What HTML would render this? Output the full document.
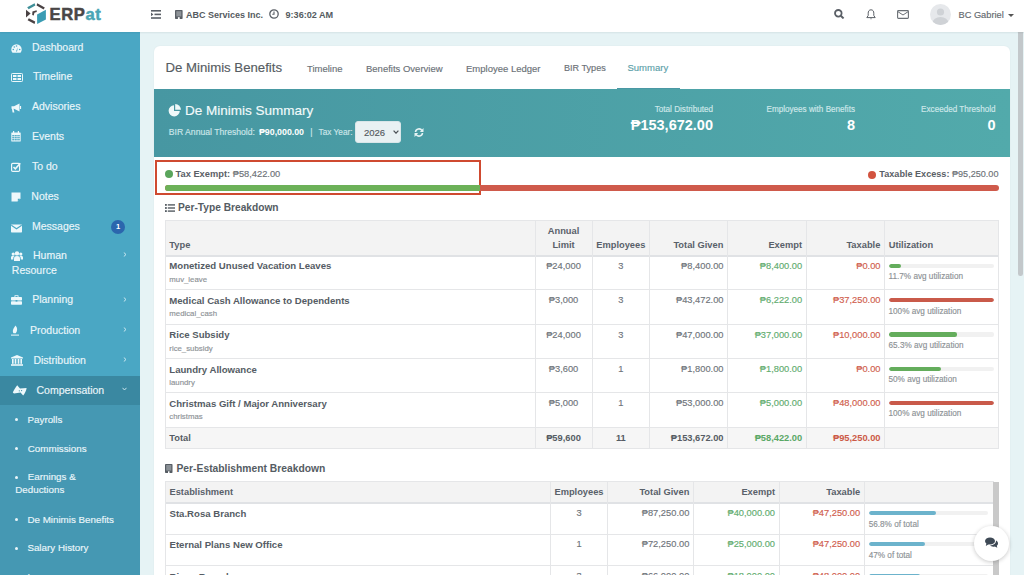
<!DOCTYPE html>
<html><head><meta charset="utf-8">
<style>
*{box-sizing:border-box;margin:0;padding:0}
html,body{width:1024px;height:575px;overflow:hidden}
body{font-family:"Liberation Sans",sans-serif;background:#e6f3f5;position:relative;color:#555d66;-webkit-text-stroke-width:0.15px}
.abs{position:absolute}
b,th,[style*="font-weight:bold"],.val{-webkit-text-stroke-width:0}
#nav{position:absolute;left:0;top:0;width:1024px;height:32px;background:#fff;box-shadow:0 1px 1.5px rgba(0,40,50,.08);z-index:2}
#side{position:absolute;left:0;top:32px;width:140px;height:543px;background:#4aa7c4;color:#eaf6fa}
.si{position:absolute;left:0;width:140px;font-size:10.5px;white-space:nowrap}
.si .ic{position:absolute;left:11px;width:11px;height:10px}
.si .tx{position:absolute;left:32px}
.chev{position:absolute;left:122px;font-size:8px}
#sub{position:absolute;left:0;top:373px;width:140px;height:170px;background:#4598b3}
.sb{position:absolute;left:0;font-size:9.8px;white-space:nowrap}
.sb .dot{position:absolute;left:15px;width:3px;height:3px;border-radius:50%;background:#eaf6fa}
.sb .tx{position:absolute;left:27.5px}
#card{position:absolute;left:154px;top:46px;width:856px;height:600px;background:#fff;border-radius:6px;box-shadow:0 0 2px rgba(0,0,0,.05)}
.tab{position:absolute;font-size:9.5px;color:#6b7177;white-space:nowrap}
#teal{position:absolute;left:154px;top:89px;width:856px;height:68px;background:linear-gradient(90deg,#4797a2,#52aaab)}
.lbl{position:absolute;font-size:8.15px;color:#cfe8ea;margin-top:0.7px;white-space:nowrap;text-align:right}
.val{position:absolute;font-size:14.5px;font-weight:bold;color:#fff;white-space:nowrap;text-align:right}
table{border-collapse:collapse;table-layout:fixed;position:absolute}
td,th{border:1px solid #e3e5e8;font-size:9.3px;white-space:nowrap;overflow:hidden}
th{background:#f3f3f3;font-weight:bold;color:#59616a;vertical-align:bottom;padding:0 4px 5px 4px;line-height:13px}
td{vertical-align:top;color:#676d73;padding:5px 4px 0 4px}
.r{text-align:right}.c{text-align:center}
.nm{font-weight:bold;color:#555d66;line-height:13px}
.code{font-size:7.4px;color:#8b9095;margin-top:1px}
.g{color:#62ab6c}.rd{color:#cf5a48}
.bar{height:4px;background:#f0f0f0;border-radius:2px;position:relative;margin-top:4px}
.bar i{position:absolute;left:0;top:0;height:4px;border-radius:2px}
.ut{font-size:7.4px;color:#8b9095;margin-top:3px}
</style></head><body>
<div id="nav">
<svg class="abs" style="left:22px;top:0px" width="28" height="28" viewBox="0 0 28 28">
 <polygon fill="#3f8f98" points="5.2,7.2 12.6,3.2 13.4,5.6 6.6,9.2"/>
 <polygon fill="#4a4244" points="15.2,3.2 22.8,7.4 21.6,9.6 14.6,5.6"/>
 <polygon fill="#4a4244" points="4,9.8 8.6,13.6 4,17.6"/>
 <polygon fill="#4a4244" points="10.4,11.6 14.6,10.2 14.8,12 12.4,12.8 11.8,15.6 10.2,15"/>
 <polygon fill="#4a4244" points="5.6,20.2 6.8,18.2 13.2,21.6 12.6,24"/>
 <polygon fill="#3a9cb3" points="15.1,14.6 23.9,9.8 23.9,19.5 15.1,23.9"/>
</svg>
<div class="abs" style="left:49.5px;top:4.6px;font-size:16.6px;line-height:19px;font-weight:bold;color:#4a4747;letter-spacing:0.6px;-webkit-text-stroke:0.5px #4a4747">ERP<span style="color:#4aa5b5;-webkit-text-stroke:0.5px #4aa5b5">at</span></div>
<svg class="abs" style="left:151px;top:10px" width="10" height="9" viewBox="0 0 10 9"><g fill="#5a5f66"><rect x="0" y="0" width="10" height="1.6"/><rect x="3.5" y="3.6" width="6.5" height="1.6"/><rect x="0" y="7.2" width="10" height="1.6"/><polygon points="0,2.6 2.4,4.4 0,6.2"/></g></svg>
<svg class="abs" style="left:175px;top:10px" width="8" height="9" viewBox="0 0 8 9"><rect x="0" y="0" width="7.6" height="9" rx="0.7" fill="#5a5f66"/><rect x="1.3" y="1.2" width="5" height="5.2" fill="#8e9398"/><rect x="2.9" y="7.2" width="1.8" height="1.8" fill="#fff"/></svg>
<div class="abs" style="left:186px;top:9.6px;font-size:9px;font-weight:bold;color:#555b61">ABC Services Inc.</div>
<svg class="abs" style="left:269px;top:8.5px" width="10" height="10" viewBox="0 0 10 10"><circle cx="5" cy="5" r="4.2" fill="none" stroke="#5a5f66" stroke-width="1.3"/><path d="M5 2.6V5.3H3.3" fill="none" stroke="#5a5f66" stroke-width="1.1"/></svg>
<div class="abs" style="left:285.5px;top:9.6px;font-size:9.1px;font-weight:bold;color:#555b61">9:36:02 AM</div>
<svg class="abs" style="left:834px;top:9px" width="11" height="10" viewBox="0 0 11 10"><circle cx="4.3" cy="4.3" r="3.3" fill="none" stroke="#5a5f66" stroke-width="1.8"/><path d="M6.8 6.8L9.6 9.4" stroke="#5a5f66" stroke-width="2"/></svg>
<svg class="abs" style="left:866px;top:9px" width="10" height="11" viewBox="0 0 10 11"><path d="M5 0.8C3 0.8 2.2 2.4 2.2 4.2V6.5L0.8 8.6H9.2L7.8 6.5V4.2C7.8 2.4 7 0.8 5 0.8Z" fill="none" stroke="#5a5f66" stroke-width="1"/><path d="M4 9.5H6L5 10.5Z" fill="#5a5f66"/></svg>
<svg class="abs" style="left:897px;top:10px" width="12" height="9" viewBox="0 0 12 9"><rect x="0.6" y="0.6" width="10.8" height="7.8" rx="0.8" fill="none" stroke="#6a6f75" stroke-width="1.1"/><path d="M0.8 1.6L6 5L11.2 1.6" fill="none" stroke="#6a6f75" stroke-width="1"/></svg>
<svg class="abs" style="left:929.5px;top:3.5px" width="21" height="21" viewBox="0 0 21 21"><defs><clipPath id="av"><circle cx="10.5" cy="10.5" r="10.5"/></clipPath></defs><circle cx="10.5" cy="10.5" r="10.5" fill="#e6e8eb"/><g clip-path="url(#av)" fill="#cfd2d6"><circle cx="10.5" cy="8" r="3.6"/><ellipse cx="10.5" cy="19" rx="8" ry="6"/></g></svg>
<div class="abs" style="left:958.5px;top:9.7px;font-size:9.25px;color:#63686e">BC Gabriel</div>
<svg class="abs" style="left:1008px;top:13.5px" width="6" height="4" viewBox="0 0 6 4"><polygon points="0,0 6,0 3,3" fill="#555"/></svg>
</div>
<div id="side">
<div class="si" style="top:19px"><div class="ic" style="top:-8px"><svg width="11" height="9" viewBox="0 0 11 9"><path d="M5.5 0.3A5.2 5.2 0 0 0 0.3 5.5C0.3 6.8 0.8 8 1.5 8.7H9.5C10.2 8 10.7 6.8 10.7 5.5A5.2 5.2 0 0 0 5.5 0.3Z" fill="#eef8fb"/><g fill="#4aa7c4"><circle cx="2.3" cy="5.5" r="0.8"/><circle cx="3.3" cy="3" r="0.8"/><circle cx="5.5" cy="2" r="0.8"/><circle cx="8.7" cy="5.5" r="0.8"/><path d="M5 7.5L6.8 3.2L6 7.6Z"/></g></svg></div><div class="tx" style="left:32px;top:-9.50px;line-height:10.5px">Dashboard</div></div>
<div class="si" style="top:48px"><div class="ic" style="top:-8px"><svg width="12" height="9" viewBox="0 0 12 9"><rect x="0.5" y="0.5" width="11" height="8" rx="0.8" fill="none" stroke="#eef8fb" stroke-width="1"/><g fill="#eef8fb"><rect x="2" y="2" width="3.5" height="2"/><rect x="6.5" y="2" width="3.5" height="2"/><rect x="2" y="5" width="3.5" height="2"/><rect x="6.5" y="5" width="3.5" height="2"/></g></svg></div><div class="tx" style="left:33px;top:-9.50px;line-height:10.5px">Timeline</div></div>
<div class="si" style="top:78.5px"><div class="ic" style="top:-8px"><svg width="11" height="10" viewBox="0 0 11 10"><path d="M0.5 3.2H3L8.5 0.6V8.4L3 5.8H2.6L3.4 9.4H1.6L0.9 5.8H0.5Z" fill="#eef8fb"/><path d="M9.5 3V6" stroke="#eef8fb" stroke-width="1.2"/></svg></div><div class="tx" style="left:32px;top:-9.50px;line-height:10.5px">Advisories</div></div>
<div class="si" style="top:108px"><div class="ic" style="top:-9px"><svg width="10" height="11" viewBox="0 0 10 11"><rect x="0.3" y="1.5" width="9.4" height="9" rx="0.6" fill="#eef8fb"/><g fill="#4aa7c4"><rect x="1.3" y="4" width="1.6" height="1.4"/><rect x="3.5" y="4" width="1.4" height="1.4"/><rect x="5.3" y="4" width="1.4" height="1.4"/><rect x="7.2" y="4" width="1.5" height="1.4"/><rect x="1.3" y="6" width="1.6" height="1.4"/><rect x="3.5" y="6" width="1.4" height="1.4"/><rect x="5.3" y="6" width="1.4" height="1.4"/><rect x="7.2" y="6" width="1.5" height="1.4"/><rect x="1.3" y="8" width="1.6" height="1.4"/><rect x="3.5" y="8" width="1.4" height="1.4"/><rect x="5.3" y="8" width="1.4" height="1.4"/><rect x="7.2" y="8" width="1.5" height="1.4"/></g><g fill="#eef8fb"><rect x="2" y="0" width="1.2" height="2"/><rect x="6.8" y="0" width="1.2" height="2"/></g></svg></div><div class="tx" style="left:32px;top:-9.50px;line-height:10.5px">Events</div></div>
<div class="si" style="top:138px"><div class="ic" style="top:-8.5px"><svg width="10" height="10" viewBox="0 0 10 10"><rect x="0.6" y="1.4" width="8" height="8" rx="1.2" fill="none" stroke="#eef8fb" stroke-width="1.2"/><path d="M2.5 5L4.3 6.8L9.3 1.2" fill="none" stroke="#eef8fb" stroke-width="1.6"/></svg></div><div class="tx" style="left:32px;top:-9.50px;line-height:10.5px">To do</div></div>
<div class="si" style="top:168px"><div class="ic" style="top:-8.5px"><svg width="10" height="10" viewBox="0 0 10 10"><path d="M0.5 0.5H9.5V6.5L6.5 9.5H0.5Z" fill="#eef8fb"/><path d="M6.8 9.5V6.8H9.5" fill="#4aa7c4"/></svg></div><div class="tx" style="left:31.3px;top:-9.50px;line-height:10.5px">Notes</div></div>
<div class="si" style="top:198px"><div class="ic" style="top:-7.5px"><svg width="11" height="9" viewBox="0 0 11 9"><rect x="0" y="0.5" width="11" height="8" rx="0.7" fill="#eef8fb"/><path d="M0.3 1.2L5.5 4.8L10.7 1.2" fill="none" stroke="#4aa7c4" stroke-width="1.1"/></svg></div><div class="tx" style="left:32px;top:-9.50px;line-height:10.5px">Messages</div></div>
<div class="si" style="top:227.5px"><div class="ic" style="top:-9px"><svg width="12" height="10" viewBox="0 0 12 10"><g fill="#eef8fb"><circle cx="6" cy="2.4" r="2.2"/><circle cx="2.2" cy="3" r="1.6"/><circle cx="9.8" cy="3" r="1.6"/><path d="M3 10V7.5C3 5.8 4.2 5 6 5C7.8 5 9 5.8 9 7.5V10Z"/><path d="M0 8.5V6.5C0 5.3 0.8 4.8 2.2 4.8C2.8 4.8 3.2 4.9 3.5 5.1C2.6 5.7 2.3 6.5 2.3 7.5V8.5Z"/><path d="M12 8.5V6.5C12 5.3 11.2 4.8 9.8 4.8C9.2 4.8 8.8 4.9 8.5 5.1C9.4 5.7 9.7 6.5 9.7 7.5V8.5Z"/></g></svg></div><div class="tx" style="left:33px;top:-9.50px;line-height:10.5px">Human</div></div>
<div class="si" style="top:271.5px"><div class="ic" style="top:-9px"><svg width="11" height="10" viewBox="0 0 11 10"><g fill="#eef8fb"><path d="M3.5 2V0.8C3.5 0.3 3.8 0.2 4.2 0.2H6.8C7.2 0.2 7.5 0.3 7.5 0.8V2H6.6V1H4.4V2Z"/><rect x="0" y="2" width="11" height="3.6" rx="0.8"/><rect x="0" y="6.2" width="11" height="3.6" rx="0.8"/></g><rect x="4.6" y="5" width="1.8" height="1.6" fill="#4aa7c4"/></svg></div><div class="tx" style="left:32.2px;top:-9.50px;line-height:10.5px">Planning</div></div>
<div class="si" style="top:302px"><div class="ic" style="top:-9px"><svg width="8" height="11" viewBox="0 0 8 11"><path d="M4.5 0.5C6.5 2.5 6.8 5.5 4.8 8.2L2.5 8.2C1 6.2 2.2 3.8 4.5 0.5Z" fill="#eef8fb"/><rect x="0" y="9.6" width="8" height="1" fill="#eef8fb"/></svg></div><div class="tx" style="left:30px;top:-9.50px;line-height:10.5px">Production</div></div>
<div class="si" style="top:332px"><div class="ic" style="top:-9px"><svg width="12" height="11" viewBox="0 0 12 11"><g fill="#eef8fb"><polygon points="6,0 12,2.5 12,3.5 0,3.5 0,2.5"/><rect x="1" y="4" width="1.6" height="4.8"/><rect x="3.7" y="4" width="1.6" height="4.8"/><rect x="6.7" y="4" width="1.6" height="4.8"/><rect x="9.4" y="4" width="1.6" height="4.8"/><rect x="0" y="9.2" width="12" height="1.6"/></g></svg></div><div class="tx" style="left:33.4px;top:-9.50px;line-height:10.5px">Distribution</div></div>
<div class="abs" style="left:11.8px;top:232.5px;font-size:10.5px;line-height:10.5px">Resource</div>
<svg class="abs" style="left:122.5px;top:220px" width="4" height="5" viewBox="0 0 4 5"><path d="M0.8 0.5L3 2.5L0.8 4.5" fill="none" stroke="#d8eef5" stroke-width="0.9"/></svg>
<svg class="abs" style="left:122.5px;top:264.5px" width="4" height="5" viewBox="0 0 4 5"><path d="M0.8 0.5L3 2.5L0.8 4.5" fill="none" stroke="#d8eef5" stroke-width="0.9"/></svg>
<svg class="abs" style="left:122.5px;top:295px" width="4" height="5" viewBox="0 0 4 5"><path d="M0.8 0.5L3 2.5L0.8 4.5" fill="none" stroke="#d8eef5" stroke-width="0.9"/></svg>
<svg class="abs" style="left:122.5px;top:324.5px" width="4" height="5" viewBox="0 0 4 5"><path d="M0.8 0.5L3 2.5L0.8 4.5" fill="none" stroke="#d8eef5" stroke-width="0.9"/></svg>
<div class="abs" style="left:111px;top:187.5px;width:14px;height:14px;border-radius:50%;background:#2b66ad;color:#fff;font-size:7.5px;font-weight:bold;text-align:center;line-height:14px">1</div>
<div class="abs" style="left:0;top:344px;width:140px;height:29px;background:#3a88a1"></div>
<svg class="abs" style="left:12px;top:352px" width="16" height="12" viewBox="0 0 16 12"><path d="M0.8 8.6C1.5 6.5 3.2 4 5.2 1.2C6.2 2.4 7.2 3.6 8 4.6L14.6 4C14.3 6.5 13 9 11.2 11.6C10.2 10.6 9.3 9.6 8.6 8.6L2 9.6Z" fill="#eef8fb"/><circle cx="7.3" cy="6.8" r="0.6" fill="#3a88a1"/><circle cx="9.6" cy="6.6" r="0.6" fill="#3a88a1"/></svg>
<div class="abs" style="left:36.5px;top:352.5px;font-size:10.5px;line-height:10.5px">Compensation</div>
<svg class="abs" style="left:121.5px;top:354.5px" width="5" height="4" viewBox="0 0 5 4"><path d="M0.5 0.8L2.5 3L4.5 0.8" fill="none" stroke="#d8eef5" stroke-width="0.9"/></svg>
<div id="sub">
<div class="sb" style="top:17.600000000000023px"><div class="dot" style="top:-4.5px"></div><div class="tx" style="left:27.5px;top:-8.07px;line-height:9.8px">Payrolls</div></div>
<div class="sb" style="top:46.60000000000002px"><div class="dot" style="top:-4.5px"></div><div class="tx" style="left:27.8px;top:-8.07px;line-height:9.8px">Commissions</div></div>
<div class="sb" style="top:75px"><div class="dot" style="top:-4.5px"></div><div class="tx" style="left:27.8px;top:-8.07px;line-height:9.8px">Earnings &amp;</div></div>
<div class="sb" style="top:88.30000000000001px"><div class="tx" style="left:15.3px;top:-8.07px;line-height:9.8px">Deductions</div></div>
<div class="sb" style="top:117.60000000000002px"><div class="dot" style="top:-4.5px"></div><div class="tx" style="left:27.4px;top:-8.07px;line-height:9.8px">De Minimis Benefits</div></div>
<div class="sb" style="top:146.29999999999995px"><div class="dot" style="top:-4.5px"></div><div class="tx" style="left:27.4px;top:-8.07px;line-height:9.8px">Salary History</div></div>
<div class="sb" style="top:175.5px"><div class="dot" style="top:-4.5px"></div><div class="tx" style="left:27.4px;top:-8.07px;line-height:9.8px">Loans</div></div>
</div>
</div>
<div id="card">
<div class="abs" style="left:11.5px;top:14.8px;font-size:13.2px;color:#565c62;line-height:13.2px">De Minimis Benefits</div>
<div class="tab" style="left:153px;top:17.4px">Timeline</div>
<div class="tab" style="left:212px;top:17.4px">Benefits Overview</div>
<div class="tab" style="left:312px;top:17.4px">Employee Ledger</div>
<div class="tab" style="left:410px;top:17.4px;font-size:9.1px">BIR Types</div>
<div class="tab" style="left:473.5px;top:16.4px;color:#5d9fa9">Summary</div>
<div class="abs" style="left:463px;top:41.7px;width:63px;height:1.6px;background:#4a98a4"></div>
</div>
<div id="teal">
<svg class="abs" style="left:13.5px;top:14.5px" width="13" height="13" viewBox="0 0 13 13"><path d="M6 1.2A5.6 5.6 0 1 0 11.8 7H6Z" fill="#eef8f9"/><path d="M7.2 0A5.8 5.8 0 0 1 13 5.8H7.2Z" fill="#eef8f9"/></svg>
<div class="abs" style="left:31px;top:15.3px;font-size:13.5px;line-height:13.5px;color:#f2fafb">De Minimis Summary</div>
<div class="abs" style="left:14.8px;top:38.9px;font-size:8.65px;line-height:8.65px;color:#cde6e9;white-space:nowrap">BIR Annual Threshold:</div>
<div class="abs" style="left:105px;top:38.7px;font-size:8.8px;line-height:8.8px;color:#fff;font-weight:bold;white-space:nowrap">&#8369;90,000.00</div>
<div class="abs" style="left:156.3px;top:38.7px;font-size:8.8px;line-height:8.8px;color:#cde6e9;white-space:nowrap">|</div>
<div class="abs" style="left:164.5px;top:39.4px;font-size:8.3px;line-height:8.3px;color:#cde6e9;white-space:nowrap">Tax Year:</div>
<div class="abs" style="left:201px;top:32px;width:46px;height:22px;background:#e9f1f3;border-radius:3px;border:1px solid #d9e6e9"></div>
<div class="abs" style="left:210px;top:39px;font-size:9.5px;line-height:9.5px;color:#555b61">2026</div>
<svg class="abs" style="left:238.8px;top:40.5px" width="6" height="4" viewBox="0 0 6 4"><path d="M0.6 0.6L3 3.2L5.4 0.6" fill="none" stroke="#4d5257" stroke-width="1.2"/></svg>
<svg class="abs" style="left:259.5px;top:38.5px" width="10" height="9" viewBox="0 0 10 9"><g fill="none" stroke="#e6f3f4" stroke-width="1.6"><path d="M1.5 4A3.5 3.5 0 0 1 8 2.6"/><path d="M8.5 5A3.5 3.5 0 0 1 2 6.4"/></g><g fill="#e6f3f4"><polygon points="9.5,0 9.5,4 5.8,4"/><polygon points="0.5,9 0.5,5 4.2,5"/></g></svg>
<div class="lbl" style="right:297px;top:16px;line-height:8px">Total Distributed</div>
<div class="val" style="right:297px;top:29px;line-height:14px">&#8369;153,672.00</div>
<div class="lbl" style="right:155px;top:16px;line-height:8px">Employees with Benefits</div>
<div class="val" style="right:155px;top:29px;line-height:14px">8</div>
<div class="lbl" style="right:14.5px;top:16px;line-height:8px">Exceeded Threshold</div>
<div class="val" style="right:14.5px;top:29px;line-height:14px">0</div>
</div>










<!--T1-->
<div class="abs" style="left:154.8px;top:159.8px;width:326.4px;height:35.5px;border:2px solid #cf4a30"></div>
<div class="abs" style="left:164.5px;top:170.2px;width:8px;height:8px;border-radius:50%;background:#5aa55c"></div>
<div class="abs" style="left:175.5px;top:170.2px;font-size:9.3px;line-height:9.3px;color:#5a6066;white-space:nowrap"><b>Tax Exempt:</b> <span style="color:#6d7277">&#8369;58,422.00</span></div>
<div class="abs" style="left:867.5px;top:170.5px;width:8.5px;height:8.5px;border-radius:50%;background:#d2533f"></div>
<div class="abs" style="right:25.5px;top:170.2px;font-size:9.1px;line-height:9.1px;color:#5a6066;white-space:nowrap"><b>Taxable Excess:</b> <span style="color:#6d7277">&#8369;95,250.00</span></div>
<div class="abs" style="left:165px;top:184.7px;width:833.5px;height:6.8px;border-radius:3.3px;background:#cf5a4b;overflow:hidden"><div style="width:315px;height:100%;background:#6cb158"></div></div>
<svg class="abs" style="left:165px;top:204px" width="10" height="8" viewBox="0 0 10 8"><g fill="#555c63"><rect x="0" y="0" width="1.8" height="1.8"/><rect x="0" y="3.1" width="1.8" height="1.8"/><rect x="0" y="6.2" width="1.8" height="1.8"/><rect x="2.8" y="0.2" width="7.2" height="1.4"/><rect x="2.8" y="3.3" width="7.2" height="1.4"/><rect x="2.8" y="6.4" width="7.2" height="1.4"/></g></svg>
<div class="abs" style="left:178px;top:203px;font-size:10.2px;line-height:10.2px;font-weight:bold;color:#555c63;white-space:nowrap">Per-Type Breakdown</div>
<div class="abs" style="left:165px;top:220.3px;width:833px;height:35.0px;background:#f3f3f3"></div>
<div class="abs" style="left:165px;top:427.6px;width:833px;height:20.899999999999977px;background:#f6f6f6"></div>
<div class="abs" style="left:165px;top:219.8px;width:834px;height:1px;background:#e5e6e8"></div>
<div class="abs" style="left:165px;top:254.8px;width:834px;height:2px;background:#e0e2e5"></div>
<div class="abs" style="left:165px;top:289.2px;width:834px;height:1px;background:#e5e6e8"></div>
<div class="abs" style="left:165px;top:323.6px;width:834px;height:1px;background:#e5e6e8"></div>
<div class="abs" style="left:165px;top:358.0px;width:834px;height:1px;background:#e5e6e8"></div>
<div class="abs" style="left:165px;top:392.1px;width:834px;height:1px;background:#e5e6e8"></div>
<div class="abs" style="left:165px;top:427.1px;width:834px;height:1px;background:#e5e6e8"></div>
<div class="abs" style="left:165px;top:447.8px;width:834px;height:1px;background:#e5e6e8"></div>
<div class="abs" style="left:164.5px;top:220.3px;width:1px;height:228.0px;background:#e5e6e8"></div>
<div class="abs" style="left:534.5px;top:220.3px;width:1px;height:228.0px;background:#e5e6e8"></div>
<div class="abs" style="left:591.5px;top:220.3px;width:1px;height:228.0px;background:#e5e6e8"></div>
<div class="abs" style="left:649.0px;top:220.3px;width:1px;height:228.0px;background:#e5e6e8"></div>
<div class="abs" style="left:726.5px;top:220.3px;width:1px;height:228.0px;background:#e5e6e8"></div>
<div class="abs" style="left:805.5px;top:220.3px;width:1px;height:228.0px;background:#e5e6e8"></div>
<div class="abs" style="left:883.5px;top:220.3px;width:1px;height:228.0px;background:#e5e6e8"></div>
<div class="abs" style="left:997.5px;top:220.3px;width:1px;height:228.0px;background:#e5e6e8"></div>
<div class="abs" style="top:240.93px;font-size:9.3px;line-height:9.3px;color:#59616a;font-weight:bold;left:169.3px;white-space:nowrap">Type</div>
<div class="abs" style="top:227.13px;font-size:9.3px;line-height:9.3px;color:#59616a;font-weight:bold;left:503.5px;width:120px;text-align:center;white-space:nowrap">Annual</div>
<div class="abs" style="top:240.93px;font-size:9.3px;line-height:9.3px;color:#59616a;font-weight:bold;left:503.5px;width:120px;text-align:center;white-space:nowrap">Limit</div>
<div class="abs" style="top:240.93px;font-size:9.3px;line-height:9.3px;color:#59616a;font-weight:bold;left:560.8px;width:120px;text-align:center;white-space:nowrap">Employees</div>
<div class="abs" style="top:240.93px;font-size:9.3px;line-height:9.3px;color:#59616a;font-weight:bold;right:300.70000000000005px;white-space:nowrap">Total Given</div>
<div class="abs" style="top:240.93px;font-size:9.3px;line-height:9.3px;color:#59616a;font-weight:bold;right:222px;white-space:nowrap">Exempt</div>
<div class="abs" style="top:240.93px;font-size:9.3px;line-height:9.3px;color:#59616a;font-weight:bold;right:143.70000000000005px;white-space:nowrap">Taxable</div>
<div class="abs" style="top:240.93px;font-size:9.3px;line-height:9.3px;color:#59616a;font-weight:bold;left:888.7px;white-space:nowrap">Utilization</div>
<div class="abs" style="top:261.47px;font-size:9.6px;line-height:9.6px;color:#555c64;font-weight:bold;left:169.3px;white-space:nowrap">Monetized Unused Vacation Leaves</div>
<div class="abs" style="top:276.00px;font-size:7.8px;line-height:7.8px;color:#8d9296;left:169.3px;white-space:nowrap">muv_leave</div>
<div class="abs" style="top:261.73px;font-size:9.3px;line-height:9.3px;color:#6f757b;left:503.5px;width:120px;text-align:center;white-space:nowrap">&#8369;24,000</div>
<div class="abs" style="top:261.73px;font-size:9.3px;line-height:9.3px;color:#6f757b;left:560.8px;width:120px;text-align:center;white-space:nowrap">3</div>
<div class="abs" style="top:261.73px;font-size:9.3px;line-height:9.3px;color:#6f757b;right:300.5px;white-space:nowrap">&#8369;8,400.00</div>
<div class="abs" style="top:261.73px;font-size:9.3px;line-height:9.3px;color:#62ad6f;right:221.79999999999995px;white-space:nowrap">&#8369;8,400.00</div>
<div class="abs" style="top:261.73px;font-size:9.3px;line-height:9.3px;color:#d0604e;right:143.5px;white-space:nowrap">&#8369;0.00</div>
<div class="abs" style="left:888.5px;top:263.6px;width:105.5px;height:4.2px;border-radius:2.1px;background:#f1f1f1;overflow:hidden"><div style="width:12.3px;height:100%;background:#64ad5c;border-radius:2.1px"></div></div>
<div class="abs" style="top:273.16px;font-size:8.2px;line-height:8.2px;color:#8d9296;left:888.5px;white-space:nowrap">11.7% avg utilization</div>
<div class="abs" style="top:295.87px;font-size:9.6px;line-height:9.6px;color:#555c64;font-weight:bold;left:169.3px;white-space:nowrap">Medical Cash Allowance to Dependents</div>
<div class="abs" style="top:310.40px;font-size:7.8px;line-height:7.8px;color:#8d9296;left:169.3px;white-space:nowrap">medical_cash</div>
<div class="abs" style="top:296.13px;font-size:9.3px;line-height:9.3px;color:#6f757b;left:503.5px;width:120px;text-align:center;white-space:nowrap">&#8369;3,000</div>
<div class="abs" style="top:296.13px;font-size:9.3px;line-height:9.3px;color:#6f757b;left:560.8px;width:120px;text-align:center;white-space:nowrap">3</div>
<div class="abs" style="top:296.13px;font-size:9.3px;line-height:9.3px;color:#6f757b;right:300.5px;white-space:nowrap">&#8369;43,472.00</div>
<div class="abs" style="top:296.13px;font-size:9.3px;line-height:9.3px;color:#62ad6f;right:221.79999999999995px;white-space:nowrap">&#8369;6,222.00</div>
<div class="abs" style="top:296.13px;font-size:9.3px;line-height:9.3px;color:#d0604e;right:143.5px;white-space:nowrap">&#8369;37,250.00</div>
<div class="abs" style="left:888.5px;top:298.0px;width:105.5px;height:4.2px;border-radius:2.1px;background:#f1f1f1;overflow:hidden"><div style="width:105.5px;height:100%;background:#c95a4a;border-radius:2.1px"></div></div>
<div class="abs" style="top:307.56px;font-size:8.2px;line-height:8.2px;color:#8d9296;left:888.5px;white-space:nowrap">100% avg utilization</div>
<div class="abs" style="top:330.27px;font-size:9.6px;line-height:9.6px;color:#555c64;font-weight:bold;left:169.3px;white-space:nowrap">Rice Subsidy</div>
<div class="abs" style="top:344.80px;font-size:7.8px;line-height:7.8px;color:#8d9296;left:169.3px;white-space:nowrap">rice_subsidy</div>
<div class="abs" style="top:330.53px;font-size:9.3px;line-height:9.3px;color:#6f757b;left:503.5px;width:120px;text-align:center;white-space:nowrap">&#8369;24,000</div>
<div class="abs" style="top:330.53px;font-size:9.3px;line-height:9.3px;color:#6f757b;left:560.8px;width:120px;text-align:center;white-space:nowrap">3</div>
<div class="abs" style="top:330.53px;font-size:9.3px;line-height:9.3px;color:#6f757b;right:300.5px;white-space:nowrap">&#8369;47,000.00</div>
<div class="abs" style="top:330.53px;font-size:9.3px;line-height:9.3px;color:#62ad6f;right:221.79999999999995px;white-space:nowrap">&#8369;37,000.00</div>
<div class="abs" style="top:330.53px;font-size:9.3px;line-height:9.3px;color:#d0604e;right:143.5px;white-space:nowrap">&#8369;10,000.00</div>
<div class="abs" style="left:888.5px;top:332.4px;width:105.5px;height:4.2px;border-radius:2.1px;background:#f1f1f1;overflow:hidden"><div style="width:68.9px;height:100%;background:#64ad5c;border-radius:2.1px"></div></div>
<div class="abs" style="top:341.96px;font-size:8.2px;line-height:8.2px;color:#8d9296;left:888.5px;white-space:nowrap">65.3% avg utilization</div>
<div class="abs" style="top:364.67px;font-size:9.6px;line-height:9.6px;color:#555c64;font-weight:bold;left:169.3px;white-space:nowrap">Laundry Allowance</div>
<div class="abs" style="top:379.20px;font-size:7.8px;line-height:7.8px;color:#8d9296;left:169.3px;white-space:nowrap">laundry</div>
<div class="abs" style="top:364.93px;font-size:9.3px;line-height:9.3px;color:#6f757b;left:503.5px;width:120px;text-align:center;white-space:nowrap">&#8369;3,600</div>
<div class="abs" style="top:364.93px;font-size:9.3px;line-height:9.3px;color:#6f757b;left:560.8px;width:120px;text-align:center;white-space:nowrap">1</div>
<div class="abs" style="top:364.93px;font-size:9.3px;line-height:9.3px;color:#6f757b;right:300.5px;white-space:nowrap">&#8369;1,800.00</div>
<div class="abs" style="top:364.93px;font-size:9.3px;line-height:9.3px;color:#62ad6f;right:221.79999999999995px;white-space:nowrap">&#8369;1,800.00</div>
<div class="abs" style="top:364.93px;font-size:9.3px;line-height:9.3px;color:#d0604e;right:143.5px;white-space:nowrap">&#8369;0.00</div>
<div class="abs" style="left:888.5px;top:366.8px;width:105.5px;height:4.2px;border-radius:2.1px;background:#f1f1f1;overflow:hidden"><div style="width:52.8px;height:100%;background:#64ad5c;border-radius:2.1px"></div></div>
<div class="abs" style="top:376.36px;font-size:8.2px;line-height:8.2px;color:#8d9296;left:888.5px;white-space:nowrap">50% avg utilization</div>
<div class="abs" style="top:398.77px;font-size:9.6px;line-height:9.6px;color:#555c64;font-weight:bold;left:169.3px;white-space:nowrap">Christmas Gift / Major Anniversary</div>
<div class="abs" style="top:413.30px;font-size:7.8px;line-height:7.8px;color:#8d9296;left:169.3px;white-space:nowrap">christmas</div>
<div class="abs" style="top:399.03px;font-size:9.3px;line-height:9.3px;color:#6f757b;left:503.5px;width:120px;text-align:center;white-space:nowrap">&#8369;5,000</div>
<div class="abs" style="top:399.03px;font-size:9.3px;line-height:9.3px;color:#6f757b;left:560.8px;width:120px;text-align:center;white-space:nowrap">1</div>
<div class="abs" style="top:399.03px;font-size:9.3px;line-height:9.3px;color:#6f757b;right:300.5px;white-space:nowrap">&#8369;53,000.00</div>
<div class="abs" style="top:399.03px;font-size:9.3px;line-height:9.3px;color:#62ad6f;right:221.79999999999995px;white-space:nowrap">&#8369;5,000.00</div>
<div class="abs" style="top:399.03px;font-size:9.3px;line-height:9.3px;color:#d0604e;right:143.5px;white-space:nowrap">&#8369;48,000.00</div>
<div class="abs" style="left:888.5px;top:400.9px;width:105.5px;height:4.2px;border-radius:2.1px;background:#f1f1f1;overflow:hidden"><div style="width:105.5px;height:100%;background:#c95a4a;border-radius:2.1px"></div></div>
<div class="abs" style="top:410.46px;font-size:8.2px;line-height:8.2px;color:#8d9296;left:888.5px;white-space:nowrap">100% avg utilization</div>
<div class="abs" style="top:433.73px;font-size:9.3px;line-height:9.3px;color:#555c64;font-weight:bold;left:169.3px;white-space:nowrap">Total</div>
<div class="abs" style="top:433.73px;font-size:9.3px;line-height:9.3px;color:#555c64;font-weight:bold;left:503.5px;width:120px;text-align:center;white-space:nowrap">&#8369;59,600</div>
<div class="abs" style="top:433.73px;font-size:9.3px;line-height:9.3px;color:#555c64;font-weight:bold;left:560.8px;width:120px;text-align:center;white-space:nowrap">11</div>
<div class="abs" style="top:433.73px;font-size:9.3px;line-height:9.3px;color:#555c64;font-weight:bold;right:300.5px;white-space:nowrap">&#8369;153,672.00</div>
<div class="abs" style="top:433.73px;font-size:9.3px;line-height:9.3px;color:#5aa866;font-weight:bold;right:221.79999999999995px;white-space:nowrap">&#8369;58,422.00</div>
<div class="abs" style="top:433.73px;font-size:9.3px;line-height:9.3px;color:#cc5a47;font-weight:bold;right:143.5px;white-space:nowrap">&#8369;95,250.00</div>
<svg class="abs" style="left:165px;top:464px" width="8" height="9" viewBox="0 0 8 9"><rect x="0" y="0" width="7.5" height="9" rx="0.8" fill="#555c63"/><rect x="1.2" y="1" width="5.1" height="5.6" fill="#8a9096"/><rect x="3" y="7.3" width="1.5" height="1.7" fill="#fff"/></svg>
<div class="abs" style="left:176.5px;top:464.3px;font-size:10.3px;line-height:10.3px;font-weight:bold;color:#555c63;white-space:nowrap">Per-Establishment Breakdown</div>
<div class="abs" style="left:165px;top:481.5px;width:828px;height:21.0px;background:#f3f3f3"></div>
<div class="abs" style="left:165px;top:481.0px;width:829px;height:1px;background:#e5e6e8"></div>
<div class="abs" style="left:165px;top:502.0px;width:829px;height:2px;background:#e0e2e5"></div>
<div class="abs" style="left:165px;top:533.5px;width:829px;height:1px;background:#e5e6e8"></div>
<div class="abs" style="left:165px;top:564.9px;width:829px;height:1px;background:#e5e6e8"></div>
<div class="abs" style="left:165px;top:596.5px;width:829px;height:1px;background:#e5e6e8"></div>
<div class="abs" style="left:164.5px;top:481.5px;width:1px;height:115.5px;background:#e5e6e8"></div>
<div class="abs" style="left:549.9px;top:481.5px;width:1px;height:115.5px;background:#e5e6e8"></div>
<div class="abs" style="left:607.0px;top:481.5px;width:1px;height:115.5px;background:#e5e6e8"></div>
<div class="abs" style="left:692.8px;top:481.5px;width:1px;height:115.5px;background:#e5e6e8"></div>
<div class="abs" style="left:778.6px;top:481.5px;width:1px;height:115.5px;background:#e5e6e8"></div>
<div class="abs" style="left:863.9px;top:481.5px;width:1px;height:115.5px;background:#e5e6e8"></div>
<div class="abs" style="left:992.5px;top:481.5px;width:1px;height:115.5px;background:#e5e6e8"></div>
<div class="abs" style="top:487.93px;font-size:9.3px;line-height:9.3px;color:#59616a;font-weight:bold;left:169.5px;white-space:nowrap">Establishment</div>
<div class="abs" style="top:487.93px;font-size:9.3px;line-height:9.3px;color:#59616a;font-weight:bold;left:519px;width:120px;text-align:center;white-space:nowrap">Employees</div>
<div class="abs" style="top:487.93px;font-size:9.3px;line-height:9.3px;color:#59616a;font-weight:bold;right:334.70000000000005px;white-space:nowrap">Total Given</div>
<div class="abs" style="top:487.93px;font-size:9.3px;line-height:9.3px;color:#59616a;font-weight:bold;right:249px;white-space:nowrap">Exempt</div>
<div class="abs" style="top:487.93px;font-size:9.3px;line-height:9.3px;color:#59616a;font-weight:bold;right:163.79999999999995px;white-space:nowrap">Taxable</div>
<div class="abs" style="top:508.67px;font-size:9.6px;line-height:9.6px;color:#555c64;font-weight:bold;left:169.5px;white-space:nowrap">Sta.Rosa Branch</div>
<div class="abs" style="top:508.93px;font-size:9.3px;line-height:9.3px;color:#6f757b;left:519px;width:120px;text-align:center;white-space:nowrap">3</div>
<div class="abs" style="top:508.93px;font-size:9.3px;line-height:9.3px;color:#6f757b;right:334.70000000000005px;white-space:nowrap">&#8369;87,250.00</div>
<div class="abs" style="top:508.93px;font-size:9.3px;line-height:9.3px;color:#62ad6f;right:249px;white-space:nowrap">&#8369;40,000.00</div>
<div class="abs" style="top:508.93px;font-size:9.3px;line-height:9.3px;color:#d0604e;right:163.79999999999995px;white-space:nowrap">&#8369;47,250.00</div>
<div class="abs" style="left:868.7px;top:510.8px;width:119px;height:4.2px;border-radius:2.1px;background:#f1f1f1;overflow:hidden"><div style="width:67.6px;height:100%;background:#6cb3cc;border-radius:2.1px"></div></div>
<div class="abs" style="top:520.86px;font-size:8.2px;line-height:8.2px;color:#8d9296;left:868.7px;white-space:nowrap">56.8% of total</div>
<div class="abs" style="top:540.17px;font-size:9.6px;line-height:9.6px;color:#555c64;font-weight:bold;left:169.5px;white-space:nowrap">Eternal Plans New Office</div>
<div class="abs" style="top:540.43px;font-size:9.3px;line-height:9.3px;color:#6f757b;left:519px;width:120px;text-align:center;white-space:nowrap">1</div>
<div class="abs" style="top:540.43px;font-size:9.3px;line-height:9.3px;color:#6f757b;right:334.70000000000005px;white-space:nowrap">&#8369;72,250.00</div>
<div class="abs" style="top:540.43px;font-size:9.3px;line-height:9.3px;color:#62ad6f;right:249px;white-space:nowrap">&#8369;25,000.00</div>
<div class="abs" style="top:540.43px;font-size:9.3px;line-height:9.3px;color:#d0604e;right:163.79999999999995px;white-space:nowrap">&#8369;47,250.00</div>
<div class="abs" style="left:868.7px;top:542.3px;width:119px;height:4.2px;border-radius:2.1px;background:#f1f1f1;overflow:hidden"><div style="width:55.9px;height:100%;background:#6cb3cc;border-radius:2.1px"></div></div>
<div class="abs" style="top:552.36px;font-size:8.2px;line-height:8.2px;color:#8d9296;left:868.7px;white-space:nowrap">47% of total</div>
<div class="abs" style="top:571.57px;font-size:9.6px;line-height:9.6px;color:#555c64;font-weight:bold;left:169.5px;white-space:nowrap">Binan Branch</div>
<div class="abs" style="top:571.83px;font-size:9.3px;line-height:9.3px;color:#6f757b;left:519px;width:120px;text-align:center;white-space:nowrap">3</div>
<div class="abs" style="top:571.83px;font-size:9.3px;line-height:9.3px;color:#6f757b;right:334.70000000000005px;white-space:nowrap">&#8369;66,000.00</div>
<div class="abs" style="top:571.83px;font-size:9.3px;line-height:9.3px;color:#62ad6f;right:249px;white-space:nowrap">&#8369;18,000.00</div>
<div class="abs" style="top:571.83px;font-size:9.3px;line-height:9.3px;color:#d0604e;right:163.79999999999995px;white-space:nowrap">&#8369;48,000.00</div>
<div class="abs" style="left:868.7px;top:573.7px;width:119px;height:4.2px;border-radius:2.1px;background:#f1f1f1;overflow:hidden"><div style="width:51.1px;height:100%;background:#6cb3cc;border-radius:2.1px"></div></div>
<div class="abs" style="top:583.76px;font-size:8.2px;line-height:8.2px;color:#8d9296;left:868.7px;white-space:nowrap">42.9% of total</div>
<div class="abs" style="left:993px;top:481.5px;width:6px;height:100px;background:#c9c9c9"></div>
<div class="abs" style="left:974px;top:525.5px;width:35px;height:35px;border-radius:50%;background:#fff;box-shadow:0 1px 4px rgba(0,0,0,.22)"></div>
<svg class="abs" style="left:985px;top:537px" width="13" height="11" viewBox="0 0 13 11"><g fill="#3e4955"><ellipse cx="5" cy="4" rx="5" ry="3.6"/><path d="M1.5 6L0.8 9L4 7Z"/><path d="M11 3.6C12.3 4.3 13 5.3 13 6.4C13 7.3 12.5 8.1 11.8 8.7L12.3 10.8L9.8 9.5C9.3 9.6 8.8 9.7 8.3 9.7C7 9.7 5.8 9.2 5.1 8.5C8.5 8.3 11.2 6.4 11 3.6Z"/></g></svg>
<div class="abs" style="left:1018.3px;top:30px;width:4.7px;height:246px;background:#c3c8cb;border-radius:2.3px"></div>
<!--/T1-->
</body></html>
